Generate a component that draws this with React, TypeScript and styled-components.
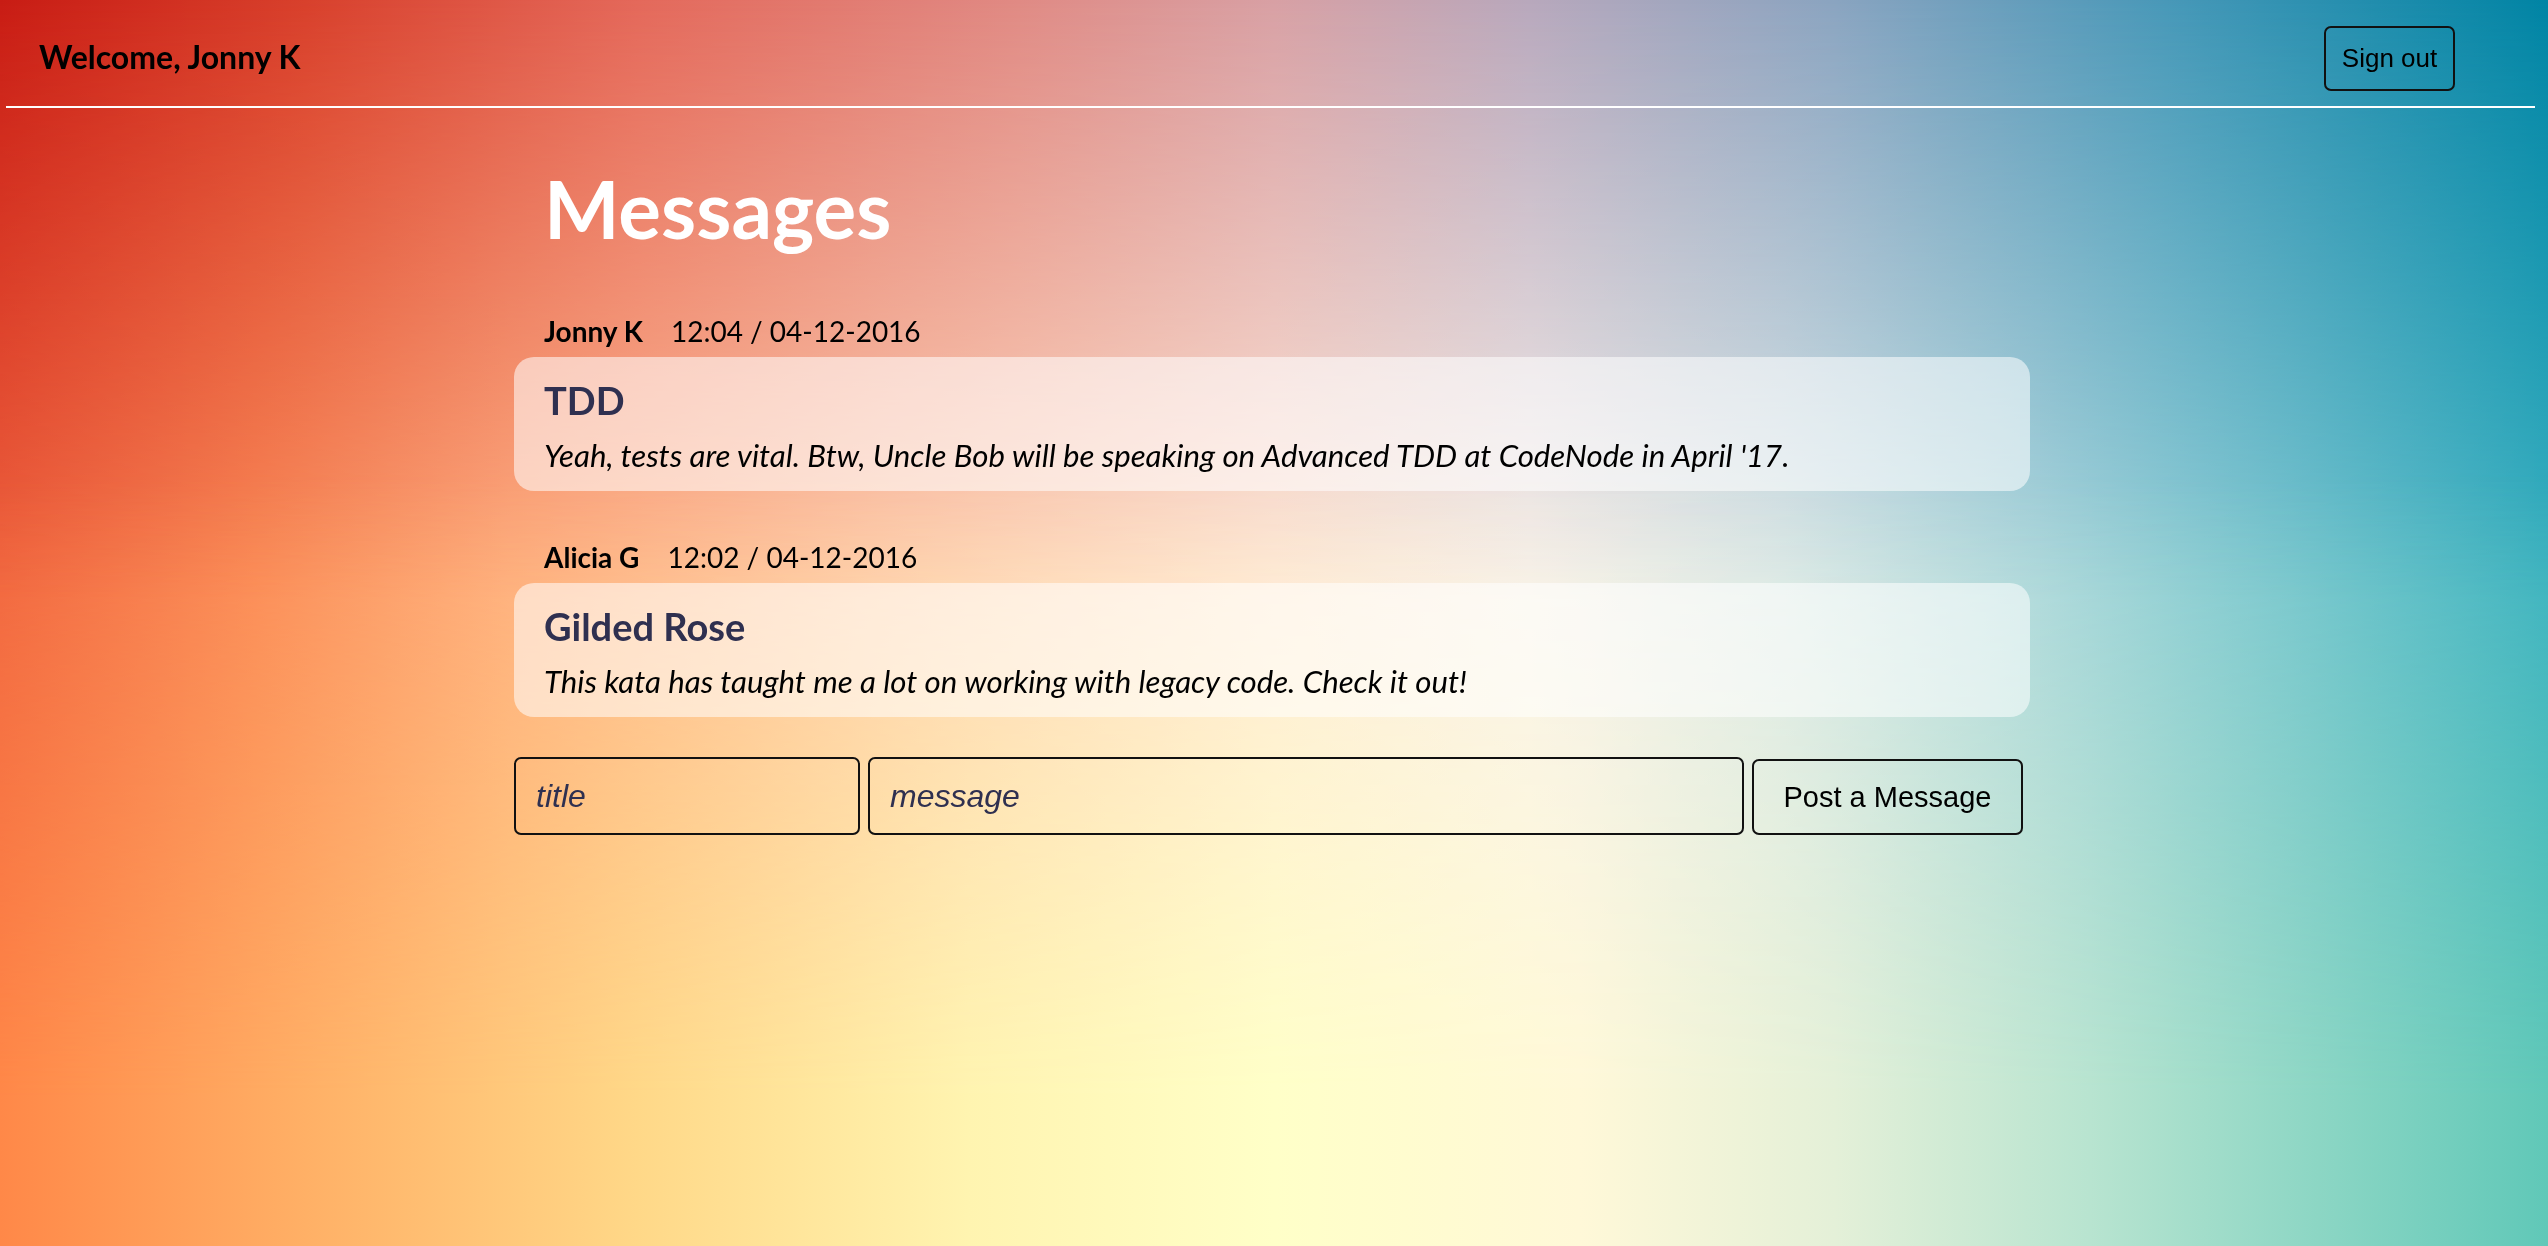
import React from "react";
import styled, { createGlobalStyle } from "styled-components";

const GlobalStyle = createGlobalStyle`
  html, body { margin: 0; padding: 0; }
  body {
    font-family: Lato, "Noto Sans", sans-serif;
    color: #000;
    min-height: 100vh;
  }
  * { box-sizing: border-box; }
`;

const Backdrop = styled.div`
  position: fixed;
  inset: 0;
  z-index: -1;
  background: linear-gradient(
    to right,
    #f06440 0%,
    #fb8a58 10%,
    #ffae80 20%,
    #ffcfb0 35%,
    #ffe8d8 50%,
    #f8f2ec 60%,
    #dceaea 70%,
    #aed8de 80%,
    #78c6d0 90%,
    #3cb2c2 100%
  );
  &::before {
    content: "";
    position: absolute;
    inset: 0;
    background: linear-gradient(
      to right,
      #c81c14 0%,
      #d8402c 12%,
      #e4685a 25%,
      #e08a84 40%,
      #d8a0a4 50%,
      #b8a8bc 60%,
      #8aa4c0 72%,
      #4898b8 85%,
      #0084a4 100%
    );
    -webkit-mask-image: linear-gradient(to bottom, #000 0%, transparent 48%);
    mask-image: linear-gradient(to bottom, #000 0%, transparent 48%);
  }
  &::after {
    content: "";
    position: absolute;
    inset: 0;
    background: linear-gradient(
      to right,
      #ff8848 0%,
      #ffb066 12%,
      #ffd888 25%,
      #fff4b0 38%,
      #ffffc8 50%,
      #fff8d8 62%,
      #e4f0d8 72%,
      #b8e4d0 82%,
      #8cd6c4 91%,
      #60c8b8 100%
    );
    -webkit-mask-image: linear-gradient(to top, #000 0%, #000 12%, transparent 62%);
    mask-image: linear-gradient(to top, #000 0%, #000 12%, transparent 62%);
  }
`;

const Header = styled.header`
  display: flex;
  align-items: center;
  justify-content: space-between;
  margin: 0 13px 0 6px;
  padding: 26px 80px 15px 33px;
  border-bottom: 2px solid #fff;
`;

const Welcome = styled.div`
  font-family: Lato, sans-serif;
  font-weight: 700;
  font-size: 32px;
  color: #000;
  margin-bottom: 5px;
`;

const OutlineButton = styled.button<{ $w: number; $h: number; $fs: number }>`
  width: ${(p) => p.$w}px;
  height: ${(p) => p.$h}px;
  font-family: "Liberation Sans", Arial, sans-serif;
  font-size: ${(p) => p.$fs}px;
  color: #000;
  background: transparent;
  border: 2px solid #111;
  border-radius: 7px;
  padding: 0;
  cursor: pointer;
`;

const Main = styled.main`
  width: 1516px;
  margin-left: calc(50% - 760px);
`;

const Title = styled.h1`
  margin: 0;
  padding: 52px 0 0 30px;
  font-family: Lato, sans-serif;
  font-weight: 700;
  font-size: 80px;
  line-height: 1.2;
  color: #fff;
`;

const Message = styled.section<{ $top: number }>`
  margin-top: ${(p) => p.$top}px;
`;

const Meta = styled.div`
  display: flex;
  gap: 28px;
  padding-left: 30px;
  font-size: 28px;
  line-height: 34px;
  margin-bottom: 9px;
`;

const Author = styled.span`
  font-weight: 700;
`;

const Stamp = styled.span`
  font-weight: 400;
`;

const Card = styled.div`
  background: rgba(255, 255, 255, 0.55);
  border-radius: 20px;
  padding: 20px 30px 18px;
`;

const CardTitle = styled.h2`
  margin: 0 0 14px;
  font-family: Lato, sans-serif;
  font-weight: 700;
  font-size: 38px;
  line-height: 46px;
  color: #2f3050;
`;

const CardBody = styled.p`
  margin: 0;
  font-style: italic;
  font-size: 31.2px;
  line-height: 36px;
  color: #000;
`;

const Form = styled.form`
  display: flex;
  align-items: flex-end;
  gap: 8px;
  margin-top: 40px;
  padding-right: 7px;
`;

const Field = styled.input<{ $w?: number }>`
  ${(p) => (p.$w ? `width: ${p.$w}px; flex: none;` : "flex: 1; min-width: 0;")}
  height: 78px;
  padding: 0 20px;
  font-family: "Liberation Sans", Arial, sans-serif;
  font-size: 32px;
  font-style: italic;
  color: #2f3050;
  background: transparent;
  border: 2px solid #111;
  border-radius: 7px;
  outline: none;
  &::placeholder {
    color: #2f3050;
    opacity: 1;
  }
`;

const messages = [
  {
    author: "Jonny K",
    stamp: "12:04 / 04-12-2016",
    title: "TDD",
    body: "Yeah, tests are vital. Btw, Uncle Bob will be speaking on Advanced TDD at CodeNode in April '17.",
  },
  {
    author: "Alicia G",
    stamp: "12:02 / 04-12-2016",
    title: "Gilded Rose",
    body: "This kata has taught me a lot on working with legacy code. Check it out!",
  },
];

export default function App() {
  return (
    <>
      <GlobalStyle />
      <Backdrop />
      <Header>
        <Welcome>Welcome, Jonny K</Welcome>
        <OutlineButton $w={131} $h={65} $fs={26}>
          Sign out
        </OutlineButton>
      </Header>
      <Main>
        <Title>Messages</Title>
        {messages.map((m, i) => (
          <Message key={m.title} $top={i === 0 ? 58 : 49}>
            <Meta>
              <Author>{m.author}</Author>
              <Stamp>{m.stamp}</Stamp>
            </Meta>
            <Card>
              <CardTitle>{m.title}</CardTitle>
              <CardBody>{m.body}</CardBody>
            </Card>
          </Message>
        ))}
        <Form onSubmit={(e) => e.preventDefault()}>
          <Field $w={346} placeholder="title" />
          <Field placeholder="message" />
          <OutlineButton type="submit" $w={271} $h={76} $fs={29}>
            Post a Message
          </OutlineButton>
        </Form>
      </Main>
    </>
  );
}
